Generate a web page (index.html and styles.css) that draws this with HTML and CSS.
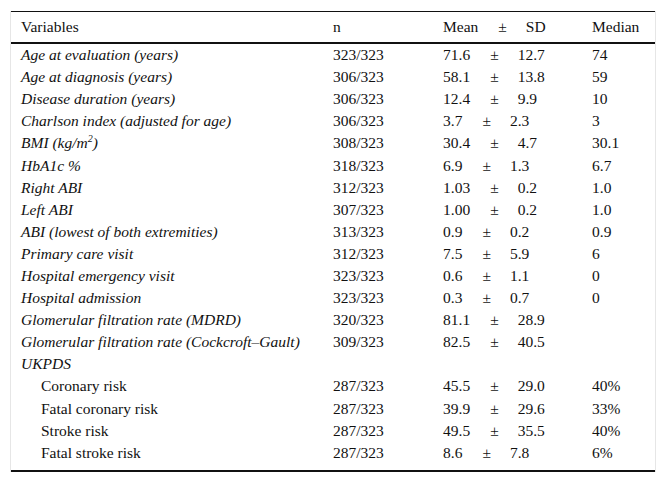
FILE: index.html
```html
<!DOCTYPE html>
<html>
<head>
<meta charset="utf-8">
<link rel="stylesheet" href="styles.css">
</head>
<body>
<div class="frame">
<table class="data">
<thead>
<tr><th class="c-var">Variables</th><th class="c-n">n</th><th class="c-ms"><span class="m">Mean</span><span class="pm hpm">±</span><span class="sd">SD</span></th><th class="c-med">Median</th></tr>
</thead>
<tbody>
<tr><td class="c-var it">Age at evaluation (years)</td><td>323/323</td><td class="c-ms"><span class="m">71.6</span><span class="pm">±</span><span class="sd">12.7</span></td><td>74</td></tr>
<tr><td class="c-var it">Age at diagnosis (years)</td><td>306/323</td><td class="c-ms"><span class="m">58.1</span><span class="pm">±</span><span class="sd">13.8</span></td><td>59</td></tr>
<tr><td class="c-var it">Disease duration (years)</td><td>306/323</td><td class="c-ms"><span class="m">12.4</span><span class="pm">±</span><span class="sd">9.9</span></td><td>10</td></tr>
<tr><td class="c-var it">Charlson index (adjusted for age)</td><td>306/323</td><td class="c-ms"><span class="m">3.7</span><span class="pm">±</span><span class="sd">2.3</span></td><td>3</td></tr>
<tr><td class="c-var it">BMI (kg/m<sup>2</sup>)</td><td>308/323</td><td class="c-ms"><span class="m">30.4</span><span class="pm">±</span><span class="sd">4.7</span></td><td>30.1</td></tr>
<tr><td class="c-var it">HbA1c %</td><td>318/323</td><td class="c-ms"><span class="m">6.9</span><span class="pm">±</span><span class="sd">1.3</span></td><td>6.7</td></tr>
<tr><td class="c-var it">Right ABI</td><td>312/323</td><td class="c-ms"><span class="m">1.03</span><span class="pm">±</span><span class="sd">0.2</span></td><td>1.0</td></tr>
<tr><td class="c-var it">Left ABI</td><td>307/323</td><td class="c-ms"><span class="m">1.00</span><span class="pm">±</span><span class="sd">0.2</span></td><td>1.0</td></tr>
<tr><td class="c-var it">ABI (lowest of both extremities)</td><td>313/323</td><td class="c-ms"><span class="m">0.9</span><span class="pm">±</span><span class="sd">0.2</span></td><td>0.9</td></tr>
<tr><td class="c-var it">Primary care visit</td><td>312/323</td><td class="c-ms"><span class="m">7.5</span><span class="pm">±</span><span class="sd">5.9</span></td><td>6</td></tr>
<tr><td class="c-var it">Hospital emergency visit</td><td>323/323</td><td class="c-ms"><span class="m">0.6</span><span class="pm">±</span><span class="sd">1.1</span></td><td>0</td></tr>
<tr><td class="c-var it">Hospital admission</td><td>323/323</td><td class="c-ms"><span class="m">0.3</span><span class="pm">±</span><span class="sd">0.7</span></td><td>0</td></tr>
<tr><td class="c-var it">Glomerular filtration rate (MDRD)</td><td>320/323</td><td class="c-ms"><span class="m">81.1</span><span class="pm">±</span><span class="sd">28.9</span></td><td></td></tr>
<tr><td class="c-var it">Glomerular filtration rate (Cockcroft–Gault)</td><td>309/323</td><td class="c-ms"><span class="m">82.5</span><span class="pm">±</span><span class="sd">40.5</span></td><td></td></tr>
<tr><td class="c-var it">UKPDS</td><td></td><td></td><td></td></tr>
<tr><td class="c-var sub">Coronary risk</td><td>287/323</td><td class="c-ms"><span class="m">45.5</span><span class="pm">±</span><span class="sd">29.0</span></td><td>40%</td></tr>
<tr><td class="c-var sub">Fatal coronary risk</td><td>287/323</td><td class="c-ms"><span class="m">39.9</span><span class="pm">±</span><span class="sd">29.6</span></td><td>33%</td></tr>
<tr><td class="c-var sub">Stroke risk</td><td>287/323</td><td class="c-ms"><span class="m">49.5</span><span class="pm">±</span><span class="sd">35.5</span></td><td>40%</td></tr>
<tr><td class="c-var sub">Fatal stroke risk</td><td>287/323</td><td class="c-ms"><span class="m">8.6</span><span class="pm">±</span><span class="sd">7.8</span></td><td>6%</td></tr>
</tbody>
</table>
</div>
</body>
</html>
```
FILE: styles.css
```css
html, body {
  margin: 0;
  padding: 0;
  background: #fff;
}
body {
  font-family: "Liberation Serif", "Times New Roman", serif;
  font-size: 15.5px;
  color: #111;
}
.frame {
  margin: 11px 0 0 10px;
  width: 646px;
  border-left: 1px solid #e6e6e6;
  border-right: 1px solid #e6e6e6;
  box-sizing: border-box;
}
.data {
  width: 100%;
  border-collapse: collapse;
  table-layout: fixed;
  border-top: 1px solid #111;
  border-bottom: 2px solid #111;
}
.data th {
  font-weight: normal;
  text-align: left;
  height: 30px;
  padding: 0;
  border-bottom: 2px solid #111;
  vertical-align: middle;
}
.data td {
  padding: 0;
  height: 22.1px;
  line-height: 22px;
  vertical-align: middle;
  white-space: nowrap;
}
.data tbody tr:last-child td {
  height: 28px;
  vertical-align: top;
}
.c-var { width: 312px; padding-left: 10px !important; }
.c-n { width: 110px; }
.c-ms { width: 149px; }
.it { font-style: italic; }
.sub { padding-left: 30px !important; }
.m { display: inline-block; }
.pm { display: inline-block; margin: 0 19px 0 20px; }
.hpm { margin: 0 19px 0 20px; }
sup {
  font-size: 10px;
  line-height: 0;
  vertical-align: 6px;
}
```
